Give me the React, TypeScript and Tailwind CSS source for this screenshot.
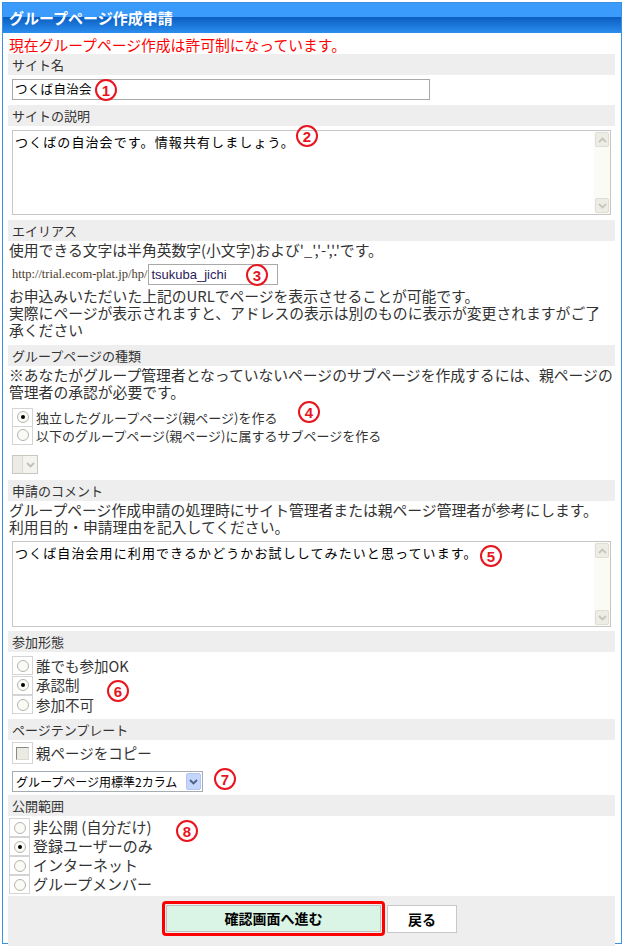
import React from 'react'

// circled annotation number laid over the form
const Num = ({ n, className }: { n: string; className: string }) => (
  <span
    className={`absolute flex h-[22px] w-[22px] items-center justify-center rounded-full border-2 border-[#e8141e] text-[15px] font-bold leading-none text-[#e8141e] font-['Liberation_Sans',sans-serif] ${className}`}
  >
    {n}
  </span>
)

const Label = ({ children }: { children: React.ReactNode }) => (
  <div className="h-[21px] bg-[#eeeeee] pl-[4px] text-[13px] leading-[21px] text-[#333333]">{children}</div>
)

const Radio = ({ checked = false }: { checked?: boolean }) => (
  <span className="flex h-[19px] w-[21px] shrink-0 items-center justify-center border border-[#d4d4d4] bg-white">
    <span className="flex h-[12px] w-[12px] items-center justify-center rounded-full border border-[#b4b4ac] bg-[#fbfbf6]">
      {checked && <span className="h-[4px] w-[4px] rounded-full bg-black" />}
    </span>
  </span>
)

const Chevron = ({ up = false, color }: { up?: boolean; color: string }) => (
  <svg width="9" height="6" viewBox="0 0 9 6" className="block">
    <path d={up ? 'M1 5 L4.5 1.5 L8 5' : 'M1 1 L4.5 4.5 L8 1'} fill="none" stroke={color} strokeWidth="1.8" />
  </svg>
)

const Scrollbar = () => (
  <div className="flex w-[16px] shrink-0 flex-col justify-between bg-[#fbfbf5] p-[1px]">
    <span className="flex h-[15px] items-center justify-center rounded-[2px] border border-[#dfded4] bg-[#eeede5]">
      <Chevron up color="#c6c6be" />
    </span>
    <span className="flex h-[15px] items-center justify-center rounded-[2px] border border-[#dfded4] bg-[#eeede5]">
      <Chevron color="#c6c6be" />
    </span>
  </div>
)

export default function App() {
  return (
    <div className="relative h-[946px] w-[624px] bg-white p-[2px] font-['Noto_Sans_CJK_JP',sans-serif]">
      <div className="h-[942px] w-[620px] border border-[#3d8fe0] bg-white">
        {/* Header */}
        <div className="flex h-[30px] items-center bg-[linear-gradient(to_bottom,#3a9bfd_0px,#3a9bfd_14px,#0b5dc0_14px,#2a8eef_30px)] pl-[6px] text-[15px] font-bold text-white">
          グループページ作成申請
        </div>

        <div className="mt-[2px] ml-[5px] mr-[6px]">
          <div className="h-[19px] pl-[1px] text-[14.8px] leading-[19px] text-[#ff0000]">
            現在グループページ作成は許可制になっています。
          </div>

          <Label>サイト名</Label>
          <div className="h-[30px] pl-[4px] pt-[4px]">
            <div className="flex h-[21px] w-[418px] items-center border border-[#a9a9a9] pl-[2px] text-[12.5px] tracking-[0.3px] text-black">
              つくば自治会
            </div>
          </div>

          <Label>サイトの説明</Label>
          <div className="h-[94px] pl-[4px] pt-[4px]">
            <div className="flex h-[85px] w-[599px] border border-[#c6c6c6]">
              <div className="flex-1 px-[2px] pt-[3px] text-[13px] leading-[16px] tracking-[1.1px] text-black">
                つくばの自治会です。情報共有しましょう。
              </div>
              <Scrollbar />
            </div>
          </div>

          <Label>エイリアス</Label>
          <div className="h-[104px] pl-[1px] text-[14.8px] leading-[17px] text-[#333333]">
            <div>使用できる文字は半角英数字(小文字)および'_','-','.'です。</div>
            <div className="mt-[4px] flex h-[25px] items-center pl-[3px]">
              <span className="font-['Liberation_Serif',serif] text-[12.5px] text-[#4a3a2a]">http://trial.ecom-plat.jp/hp/</span>
              <span className="ml-[1px] flex h-[21px] w-[130px] items-center border border-[#a9a9a9] pl-[2px] font-['Liberation_Sans',sans-serif] text-[13px] text-[#2d1a5a]">
                tsukuba_jichi
              </span>
            </div>
            <div>お申込みいただいた上記のURLでページを表示させることが可能です。</div>
            <div>実際にページが表示されますと、アドレスの表示は別のものに表示が変更されますがご了</div>
            <div>承ください</div>
          </div>

          <Label>グループページの種類</Label>
          <div className="h-[114px] pl-[1px] text-[14.8px] leading-[17px] text-[#333333]">
            <div>※あなたがグループ管理者となっていないページのサブページを作成するには、親ページの</div>
            <div>管理者の承認が必要です。</div>
            <div className="mt-[8px] pl-[3px] text-[13px]">
              <div className="flex h-[18px] items-center gap-[3px]">
                <Radio checked />
                <span>独立したグループページ(親ページ)を作る</span>
              </div>
              <div className="flex h-[18px] items-center gap-[3px]">
                <Radio />
                <span>以下のグループページ(親ページ)に属するサブページを作る</span>
              </div>
            </div>
            <div className="mt-[11px] ml-[3px] flex h-[19px] w-[26px] justify-end border border-[#c8c8c0] bg-[#ecebe4]">
              <span className="flex w-[15px] items-center justify-center border-l border-[#dcdcd4] bg-[#f4f4ee]">
                <Chevron color="#c0c0b8" />
              </span>
            </div>
          </div>

          <Label>申請のコメント</Label>
          <div className="h-[130px] pl-[1px] text-[14.8px] leading-[17px] text-[#333333]">
            <div>グループページ作成申請の処理時にサイト管理者または親ページ管理者が参考にします。</div>
            <div>利用目的・申請理由を記入してください。</div>
            <div className="mt-[6px] ml-[3px] flex h-[86px] w-[599px] border border-[#c6c6c6]">
              <div className="flex-1 px-[2px] pt-[3px] text-[13px] leading-[16px] tracking-[1.1px] text-black">
                つくば自治会用に利用できるかどうかお試ししてみたいと思っています。
              </div>
              <Scrollbar />
            </div>
          </div>

          <Label>参加形態</Label>
          <div className="h-[67px] pl-[4px] pt-[4px] text-[14.5px] text-[#333333]">
            {['誰でも参加OK', '承認制', '参加不可'].map((t, i) => (
              <div key={t} className="flex h-[19.5px] items-center gap-[3px]">
                <Radio checked={i === 1} />
                <span>{t}</span>
              </div>
            ))}
          </div>

          <Label>ページテンプレート</Label>
          <div className="h-[55px] pl-[4px] pt-[2px] text-[14.5px] text-[#333333]">
            <div className="flex h-[22px] items-center gap-[3px]">
              <span className="flex h-[22px] w-[21px] items-center justify-center border border-[#d4d4d4] bg-white">
                <span className="h-[13px] w-[13px] border border-t-[#8a8a84] border-l-[#8a8a84] border-r-[#dcdcd4] border-b-[#dcdcd4] bg-[#ecebe3]" />
              </span>
              <span>親ページをコピー</span>
            </div>
            <div className="mt-[7px] flex h-[21px] w-[191px] items-center justify-between border border-[#a5acb2] pl-[3px] text-[12px] text-black">
              <span>グループページ用標準2カラム</span>
              <span className="mr-[1px] flex h-[17px] w-[15px] items-center justify-center rounded-[2px] border border-[#b2c5f4] bg-[#c4d6fb]">
                <Chevron color="#4d6185" />
              </span>
            </div>
          </div>

          <Label>公開範囲</Label>
          <div className="h-[80px] pl-[1px] pt-[2px] text-[15px] text-[#333333]">
            {['非公開 (自分だけ)', '登録ユーザーのみ', 'インターネット', 'グループメンバー'].map((t, i) => (
              <div key={t} className="flex h-[19px] items-center gap-[3px]">
                <Radio checked={i === 1} />
                <span>{t}</span>
              </div>
            ))}
          </div>

          <div className="flex h-[50px] justify-center gap-[2px] bg-[#eeeeee] pt-[5px] pr-[4px]">
            <div className="h-[35px] rounded-[4px] border-[3px] border-[#ff0000] p-[1px]">
              <div className="flex h-[27px] w-[215px] items-center justify-center border border-[#c0c0c0] bg-[#daf4e5] text-[14px] font-bold text-black">
                確認画面へ進む
              </div>
            </div>
            <div className="mt-[4px] flex h-[28px] w-[70px] items-center justify-center border border-[#c8c8c8] bg-white text-[14px] font-bold text-black">
              戻る
            </div>
          </div>
        </div>
      </div>

      <Num n="1" className="left-[95px] top-[79px]" />
      <Num n="2" className="left-[296px] top-[125px]" />
      <Num n="3" className="left-[246px] top-[264px] h-[20px] w-[20px] text-[14px]" />
      <Num n="4" className="left-[298px] top-[401px]" />
      <Num n="5" className="left-[480px] top-[545px]" />
      <Num n="6" className="left-[107px] top-[680px]" />
      <Num n="7" className="left-[214px] top-[768px]" />
      <Num n="8" className="left-[176px] top-[820px]" />
    </div>
  )
}
